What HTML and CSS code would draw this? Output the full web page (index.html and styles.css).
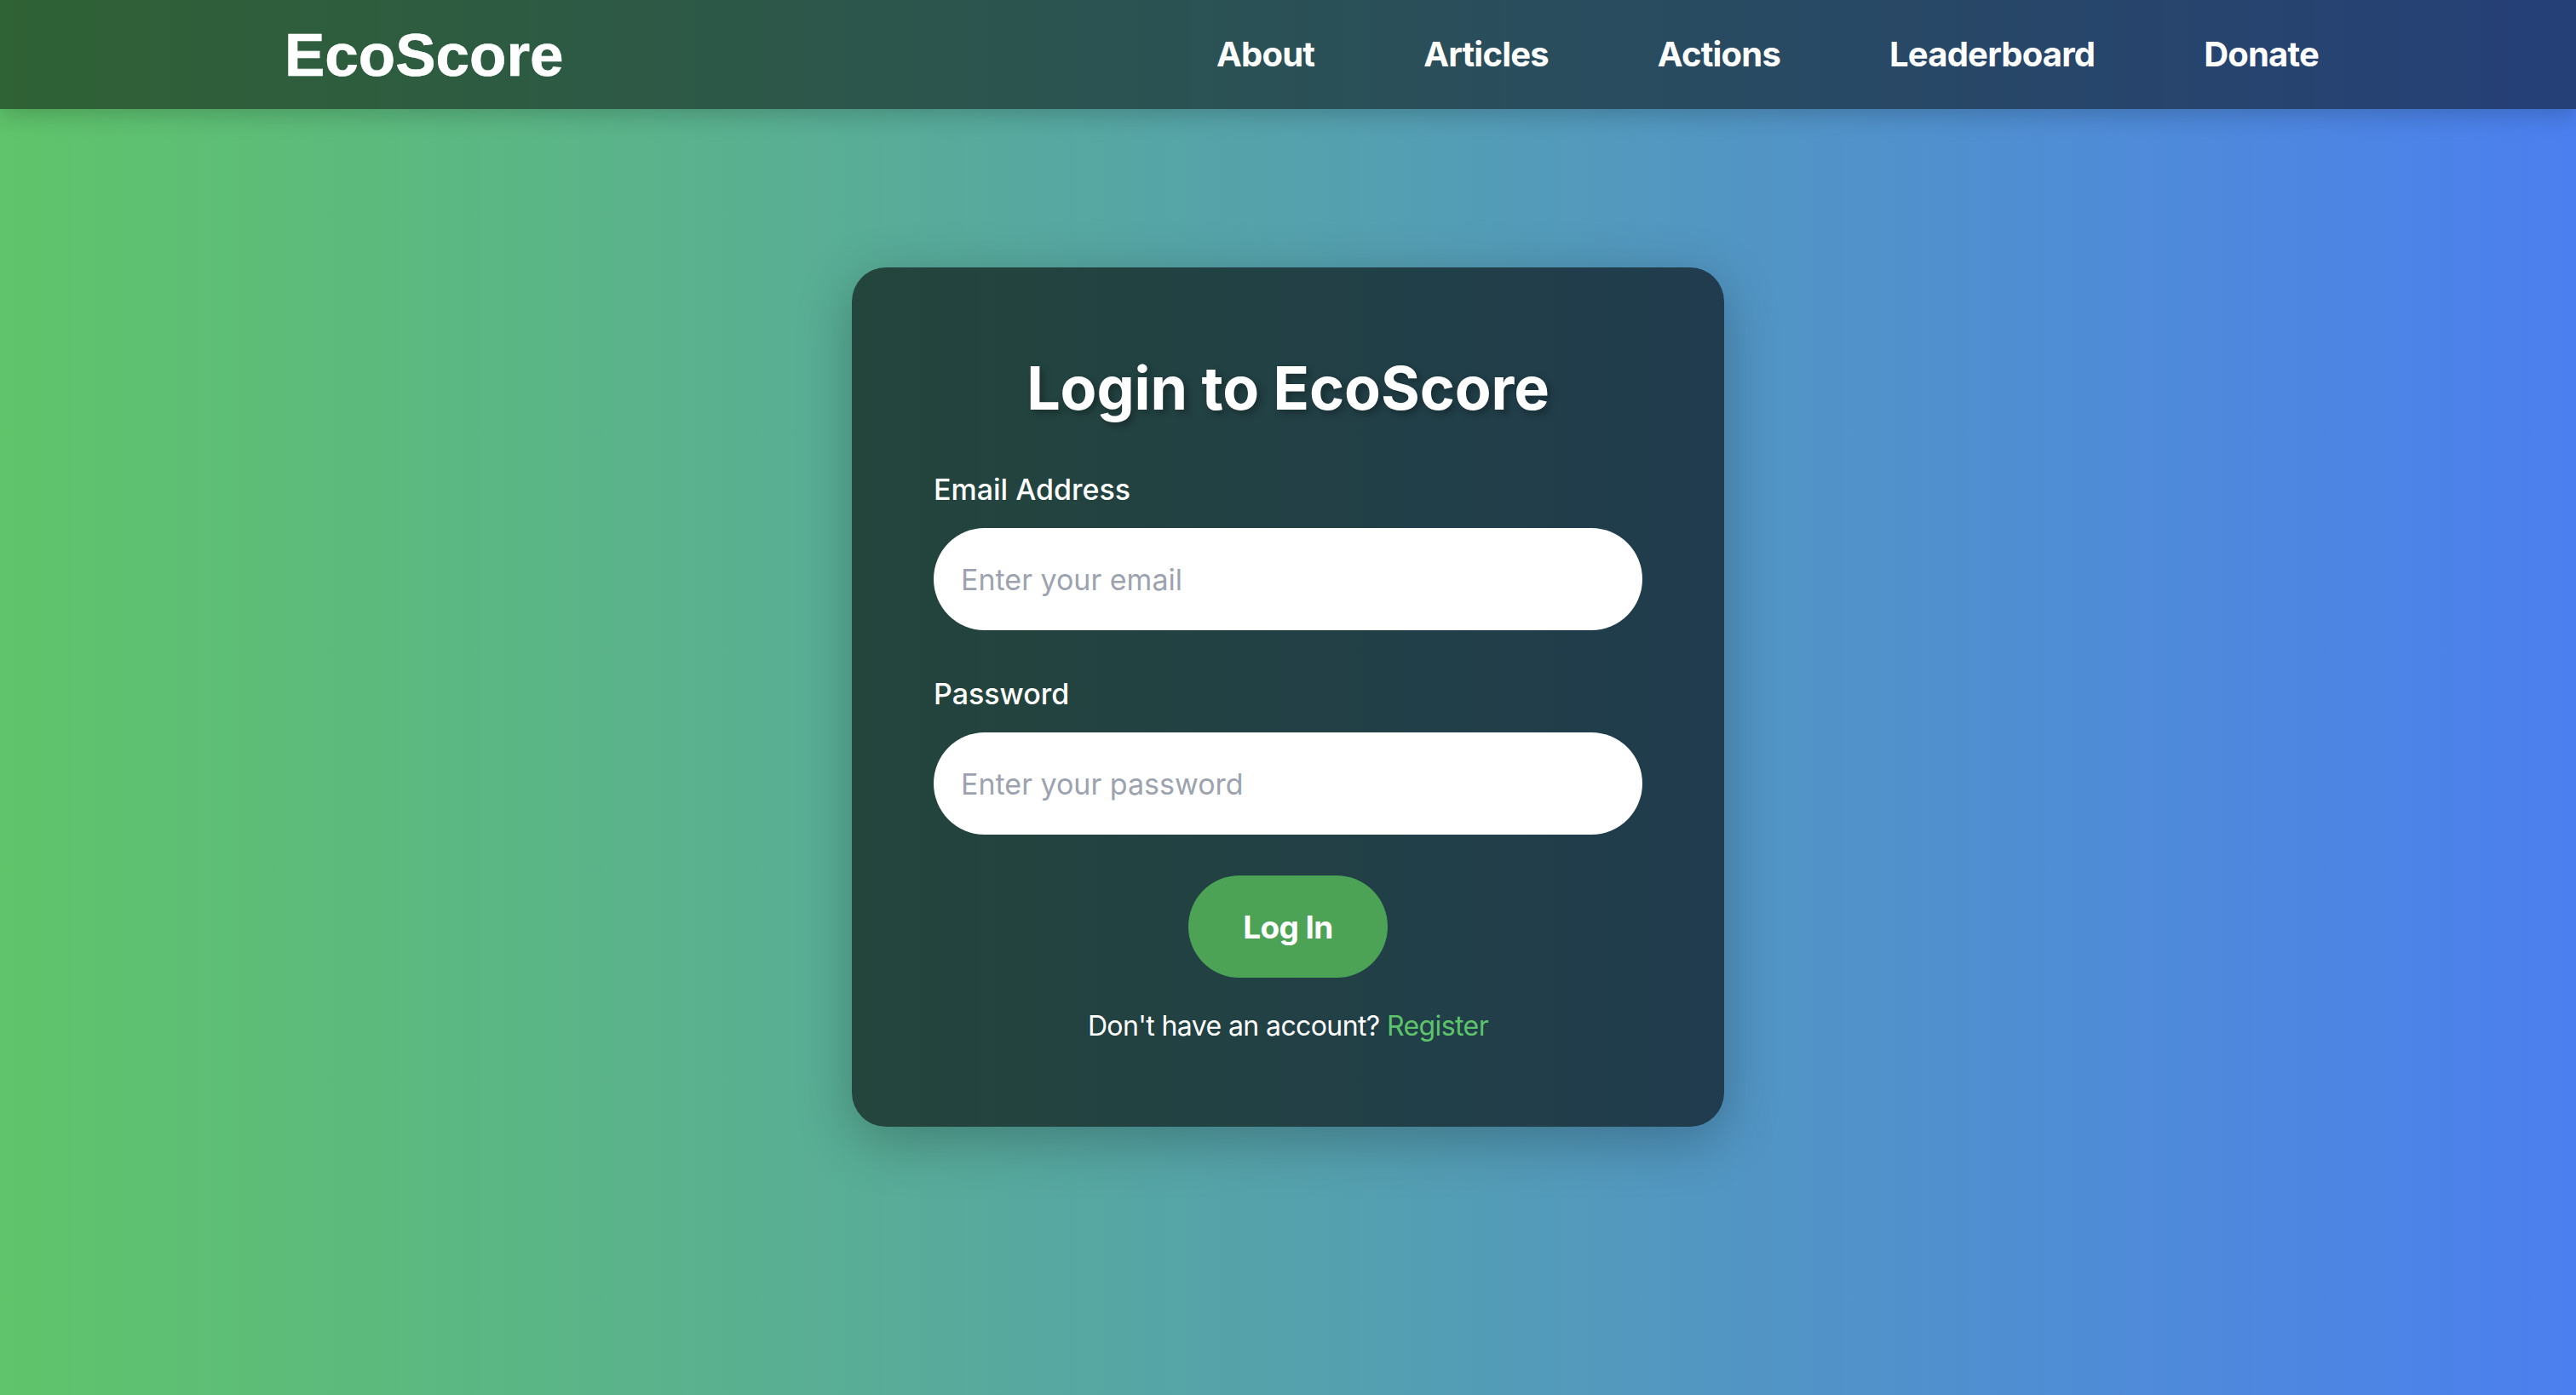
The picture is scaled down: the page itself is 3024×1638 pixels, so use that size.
FILE: index.html
```html
<!DOCTYPE html>
<html lang="en">
<head>
<meta charset="utf-8">
<title>Login - EcoScore</title>
<link rel="stylesheet" href="styles.css">
</head>
<body>
<header class="navbar">
  <a class="logo" href="#">EcoScore</a>
  <nav class="nav-links">
    <a href="#">About</a>
    <a href="#">Articles</a>
    <a href="#">Actions</a>
    <a href="#">Leaderboard</a>
    <a href="#">Donate</a>
  </nav>
</header>
<main class="page">
  <section class="card">
    <h2 class="card-title">Login to EcoScore</h2>
    <form class="form">
      <div class="field">
        <label class="field-label" for="email">Email Address</label>
        <input class="field-input" id="email" type="email" placeholder="Enter your email">
      </div>
      <div class="field">
        <label class="field-label" for="password">Password</label>
        <input class="field-input" id="password" type="password" placeholder="Enter your password">
      </div>
      <button class="btn" type="button">Log In</button>
    </form>
    <p class="register">Don't have an account? <a href="#">Register</a></p>
  </section>
</main>
</body>
</html>
```
FILE: styles.css
```css
* { box-sizing: border-box; }

html, body {
  margin: 0;
  padding: 0;
}

body {
  min-height: 100vh;
  font-family: Inter, "Noto Sans", sans-serif;
  color: #ffffff;
  background: linear-gradient(to right, #5fc46a 0%, #4b7fef 100%);
}

.navbar {
  height: 128px;
  display: flex;
  align-items: center;
  justify-content: space-between;
  padding: 0 302px 0 334px;
  background: rgba(0, 0, 0, 0.5);
  box-shadow: 0 8px 24px rgba(0, 0, 0, 0.18);
}

.logo {
  font-family: "Liberation Sans", Arial, sans-serif;
  font-weight: 700;
  font-size: 71px;
  line-height: 1;
  color: #ffffff;
  text-decoration: none;
  -webkit-text-stroke: 0.6px #ffffff;
}

.nav-links {
  display: flex;
  align-items: center;
  gap: 128px;
}

.nav-links a {
  font-size: 40px;
  font-weight: 700;
  line-height: 1;
  color: #ffffff;
  text-decoration: none;
  letter-spacing: -0.8px;
}

.page {
  padding-top: 186px;
  padding-bottom: 120px;
}

.card {
  width: 1024px;
  margin: 0 auto;
  padding: 100px 96px 99px;
  border-radius: 40px;
  background: rgba(0, 0, 0, 0.6);
  box-shadow: 0 16px 64px rgba(0, 0, 0, 0.25);
}

.card-title {
  margin: 0 0 56px;
  text-align: center;
  font-size: 70px;
  font-weight: 700;
  line-height: 84px;
  letter-spacing: -0.1px;
  text-shadow: 4px 4px 8px rgba(0, 0, 0, 0.3);
}

.form {
  display: flex;
  flex-direction: column;
  margin: 0;
}

.field {
  display: flex;
  flex-direction: column;
}

.field + .field {
  margin-top: 54px;
}

.field-label {
  font-size: 34px;
  font-weight: 500;
  line-height: 42px;
  margin-bottom: 24px;
  letter-spacing: 0;
}

.field-input {
  width: 100%;
  height: 120px;
  padding: 0 32px;
  border: none;
  border-radius: 60px;
  background: #ffffff;
  font-family: Inter, "Noto Sans", sans-serif;
  font-size: 34px;
  color: #1f2937;
  outline: none;
  letter-spacing: 0;
}

.field-input::placeholder {
  color: #9ca3af;
}

.btn {
  align-self: center;
  margin-top: 48px;
  height: 120px;
  padding: 0 64px;
  border: none;
  border-radius: 60px;
  background: #4ca255;
  color: #ffffff;
  font-family: Inter, "Noto Sans", sans-serif;
  font-size: 37px;
  font-weight: 700;
  letter-spacing: -0.6px;
  cursor: pointer;
}

.register {
  margin: 37px 0 0;
  text-align: center;
  font-size: 32px;
  line-height: 39px;
  letter-spacing: -0.6px;
}

.register a {
  color: #5ec46b;
  text-decoration: none;
}
```
